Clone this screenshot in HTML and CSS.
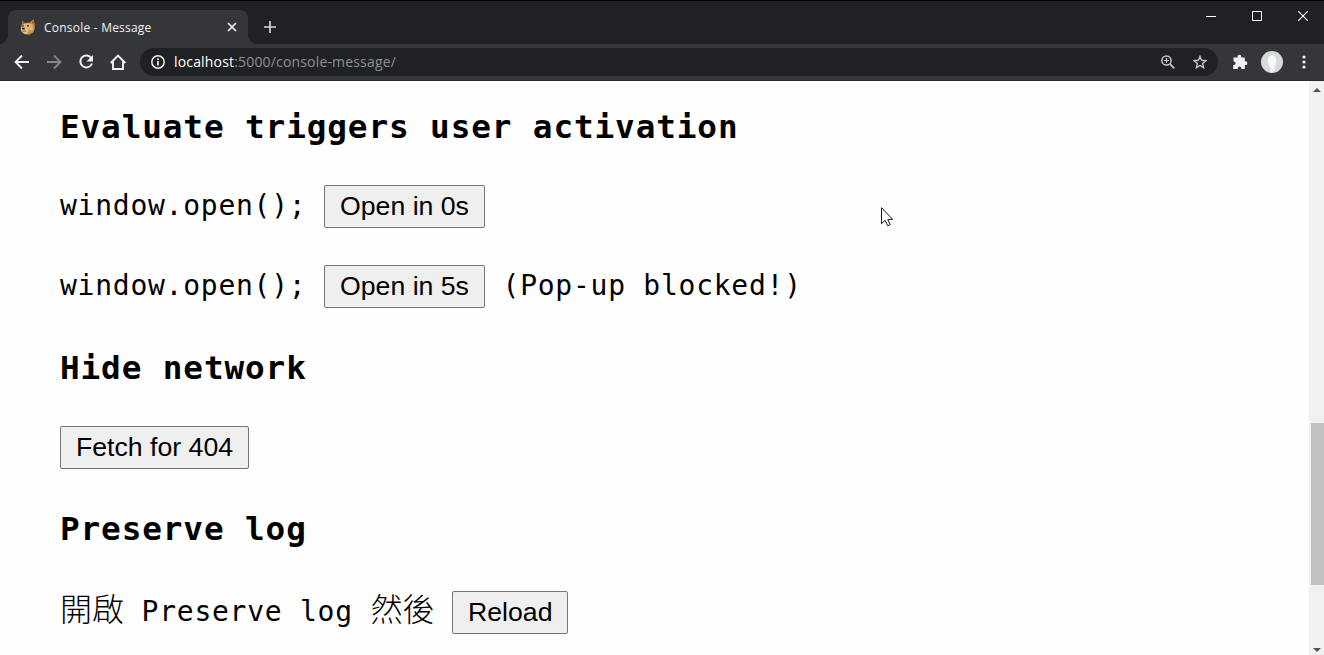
FILE: index.html
```html
<!DOCTYPE html>
<html lang="zh-Hant">
<head>
<meta charset="utf-8">
<title>Console - Message</title>
<link rel="stylesheet" href="styles.css">
</head>
<body>
<div class="browser">
  <header class="tabstrip">
    <div class="tab">
      <svg class="favicon" width="16" height="16" viewBox="0 0 16 16">
        <path fill="#c98d45" d="M2 1.500 5 4l5-.4L13.500.3l1 4 .3 5.200-1.600 4L9 15.800l-4.500-.6L1.300 12 .8 8 2 5z"/>
        <path fill="#e2b573" d="M3 5.500 6 4.500l5 .2 2 2.500-.5 4.500L8 11 4 8z"/>
        <path fill="#8a5c34" d="M2 1.800 4.500 4.200 2.500 5zM13.300 1l.9 3.700-2.700-.7z"/>
        <path fill="#dfc493" d="M1 8.500 4 8l3.500 2 1 3-2.500 2-3-1L1 11.500z"/>
        <path fill="#2a211c" d="M2.200 6.200h1.500v1.300H2.200zM7 6.300h2v1.300H7zM2 8.700h2.700v1.800H2z"/>
        <path d="M2.500 12.300 6 12" stroke="#67462e" stroke-width=".8"/>
      </svg>
      <span class="tab-title">Console - Message</span>
      <svg class="tab-close" width="10" height="10" viewBox="0 0 10 10"><path d="m1 1 8 8M9 1 1 9" stroke="#f1f1f1" stroke-width="1.700"/></svg>
    </div>
    <svg class="new-tab" width="12" height="12" viewBox="0 0 12 12"><path d="M6 0v12M0 6h12" stroke="#d2d3d5" stroke-width="1.700"/></svg>
    <div class="window-controls">
      <svg width="10" height="10" viewBox="0 0 10 10"><path d="M0 5.500h10" stroke="#fff"/></svg>
      <svg width="10" height="10" viewBox="0 0 10 10"><path d="M.5.5h9v9h-9z" fill="none" stroke="#fff"/></svg>
      <svg width="10" height="10" viewBox="0 0 10 10"><path d="m0 0 10 10M10 0 0 10" stroke="#fff" stroke-width="1.200"/></svg>
    </div>
  </header>
  <nav class="toolbar">
    <div class="nav-icons">
      <svg width="16" height="16" viewBox="0 0 16 16"><path d="M15 8H2M8 1.500 1.500 8 8 14.500" fill="none" stroke="#f1f2f3" stroke-width="1.800"/></svg>
      <svg width="16" height="16" viewBox="0 0 16 16"><path d="M1 8h13M8 1.500 14.500 8 8 14.500" fill="none" stroke="#86888b" stroke-width="1.800"/></svg>
      <svg width="16" height="16" viewBox="0 0 16 16"><path d="M13.400 4.200A6 6 0 1 0 14 9.500" fill="none" stroke="#f1f2f3" stroke-width="2"/><path d="M15 1v6.500H8.500z" fill="#f1f2f3"/></svg>
      <svg width="16" height="16" viewBox="0 0 16 16"><path d="M.7 9 8 1.500 15.300 9M3 7.500V15h10V7.500" fill="none" stroke="#f1f2f3" stroke-width="1.900"/></svg>
    </div>
    <div class="omnibox">
      <svg width="14" height="14" viewBox="0 0 14 14"><circle cx="7" cy="7" r="6.200" fill="none" stroke="#eee" stroke-width="1.500"/><path d="M7 6v4.500M7 3.200v1.700" stroke="#eee" stroke-width="1.700"/></svg>
      <span class="url"><b class="host">localhost</b>:5000/console-message/</span>
      <svg class="zoom-icon" width="14" height="14" viewBox="0 0 14 14"><circle cx="5.500" cy="5.500" r="4.600" fill="none" stroke="#c5c6c8" stroke-width="1.500"/><path d="m8.800 8.800 4.500 4.500" stroke="#c5c6c8" stroke-width="1.800"/><path d="M5.500 3v5M3 5.500h5" stroke="#c5c6c8" stroke-width="1.200"/></svg>
      <svg width="14" height="14" viewBox="0 0 14 14"><path d="m7 1.400 1.600 3.900 4.300.4-3.300 2.800 1 4.200L7 10.500l-3.600 2.200 1-4.200L1.100 5.700l4.300-.4z" fill="none" stroke="#c5c6c8" stroke-width="1.400"/></svg>
    </div>
    <svg class="extensions" width="16" height="16" viewBox="0 0 16 16"><path fill="#f1f2f3" d="M1.500 3.500h4V2.600a1.900 1.900 0 0 1 3.800 0v.9h3.500v3.800h.7a1.900 1.900 0 0 1 0 3.800h-.7V15H9.300v-.8a1.800 1.800 0 0 0-3.600 0v.8H1.200v-4h.6a1.800 1.800 0 0 0 0-3.600h-.3z"/></svg>
    <svg class="avatar" width="22" height="22" viewBox="0 0 22 22"><circle cx="11" cy="11" r="11" fill="#d9dadb"/><path fill="#f4f9fc" d="M7 8q.5-4 4.500-3.500Q15.500 5 15 10q0 4-1.500 5l.5 4-3 2.800-2-1 .8-4.500Q6.500 15 7 8z"/></svg>
    <svg class="menu-dots" width="4" height="14" viewBox="0 0 4 14"><g fill="#f1f2f3"><circle cx="2" cy="2" r="1.600"/><circle cx="2" cy="7" r="1.600"/><circle cx="2" cy="12" r="1.600"/></g></svg>
  </nav>
  <div class="viewport">
    <main class="content">
      <h2>Evaluate triggers user activation</h2>
      <p>window.open(); <button>Open in 0s</button></p>
      <p>window.open(); <button>Open in 5s</button> (Pop-up blocked!)</p>
      <h2>Hide network</h2>
      <p><button>Fetch for 404</button></p>
      <h2>Preserve log</h2>
      <p class="last"><span class="cjk">開啟</span> Preserve log <span class="cjk">然後</span> <button class="reload">Reload</button></p>
    </main>
    <aside class="scrollbar">
      <svg width="15" height="17" viewBox="0 0 15 17"><path d="m4 11 4-4 4 4z" fill="#505050"/></svg>
      <div class="thumb"></div>
      <svg class="scroll-down" width="15" height="17" viewBox="0 0 15 17"><path d="m4 10 4 4 4-4z" fill="#505050"/></svg>
    </aside>
  </div>
</div>
<svg class="cursor" width="13" height="20" viewBox="0 0 13 20"><path d="M.5.7v16l3.700-3.400 2.500 5.500 2.500-1.100-2.400-5.300h4.900z" fill="#fff" stroke="#16161c"/></svg>
</body>
</html>
```
FILE: styles.css
```css
* { box-sizing: border-box; }
body { margin: 0; overflow: hidden; background: #fefefe; }
svg { display: block; flex: none; }
.browser { width: 1324px; height: 655px; display: flex; flex-direction: column; }

.tabstrip {
  height: 44px; flex: none; display: flex; align-items: flex-end;
  padding-left: 8px; background: #202124; border-top: 1px solid #000;
}
.tab {
  position: relative; width: 240px; height: 34px; padding: 0 11px 0 12px;
  display: flex; align-items: center; background: #35363a; border-radius: 8px 8px 0 0;
}
.tab::before, .tab::after { content: ""; position: absolute; bottom: 0; width: 8px; height: 8px; }
.tab::before { left: -8px; background: radial-gradient(circle at 0 0, transparent 7.5px, #35363a 8px); }
.tab::after { right: -8px; background: radial-gradient(circle at 100% 0, transparent 7.5px, #35363a 8px); }
.tab-title { margin-left: 8px; padding-top: 1px; font: 12px/16px "Open Sans", "Noto Sans", sans-serif; letter-spacing: 0.22px; color: #f1f2f3; white-space: nowrap; }
.tab-close { margin-left: auto; }
.new-tab { margin: 0 0 11px 16px; }
.window-controls { margin: 0 16px 23px auto; display: flex; gap: 36px; }

.toolbar {
  height: 37px; flex: none; display: flex; align-items: center; padding: 0 18px 0 14px;
  background: #35363a; border-bottom: 1px solid #292a2d;
}
.nav-icons { display: flex; gap: 16px; }
.omnibox {
  width: 1078px; height: 28px; margin-left: 14px; padding: 0 11px; border-radius: 14px;
  display: flex; align-items: center; background: #202124;
}
.url { margin-left: 9px; font: 14px/20px "Open Sans", "Noto Sans", sans-serif; letter-spacing: 0.17px; color: #8e9094; white-space: nowrap; }
.host { font-weight: 400; color: #fff; }
.zoom-icon { margin: 0 18px 0 auto; }
.extensions { margin-left: 14px; }
.avatar { margin-left: 13px; }
.menu-dots { margin-left: auto; }

.viewport { flex: 1; min-height: 0; display: flex; }
.content {
  flex: 1; padding: 26px 0 0 60px; color: #000;
  font: 28px/41px "DejaVu Sans Mono", monospace; letter-spacing: 0.743px;
}
h2 { margin: 0 0 38px; font-size: 32.7px; line-height: 40px; letter-spacing: 0.88px; }
p { height: 43px; margin: 0 0 37px; display: flow-root; white-space: nowrap; }
p + h2 { margin-top: 40px; }
.last { margin-top: 42px; }
.cjk { font-family: "Noto Sans CJK TC", sans-serif; font-size: 32px; font-weight: 300; line-height: 1; letter-spacing: 0; }
button {
  height: 43px; padding: 0 15px; border: 1px solid #767676; border-radius: 2px; background: #efefef;
  color: #000; font: 26.667px/39px "Liberation Sans", Arial, sans-serif; vertical-align: baseline;
}
.reload { width: 116px; }
.scrollbar { width: 15px; display: flex; flex-direction: column; background: #f1f1f1; }
.thumb { width: 13px; height: 162px; margin: 325px 0 0 2px; background: #c1c1c1; }
.scroll-down { margin-top: auto; }
.cursor { position: absolute; left: 881px; top: 207px; }
```
